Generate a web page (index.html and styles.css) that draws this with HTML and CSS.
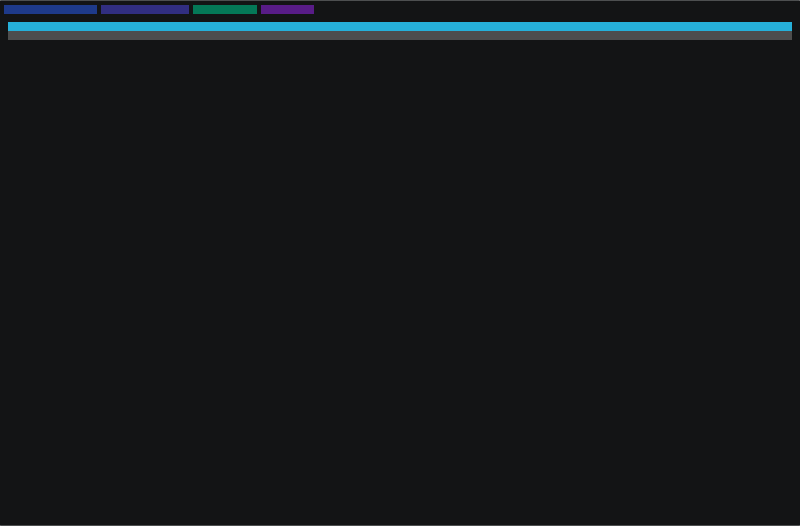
FILE: index.html
```html
<!DOCTYPE html>
<html lang="en">
  <head>
    <meta charset="utf-8">
    <meta name="viewport" content="width=device-width, initial-scale=1">
    <link rel="stylesheet" href="styles.css">
  </head>
  <body>
    <div class="panel">
      <div class="tags">
        <span class="tag tag-blue"></span>
        <span class="tag tag-indigo"></span>
        <span class="tag tag-green"></span>
        <span class="tag tag-purple"></span>
      </div>

      <div class="list">
        <div class="row row-active"></div>
        <div class="row"></div>
      </div>
    </div>
  </body>
</html>
```

FILE: styles.css
```css
* {
  box-sizing: border-box;
  margin: 0;
  padding: 0;
}

body {
  background-color: #ffffff;
  font-family: "Liberation Sans", Arial, sans-serif;
}

.panel {
  min-height: 100vh;
  padding: 4px;
  background-color: #131415;
  border-top: 1px solid #4d4f50;
  border-bottom: 1px solid #4d4f50;
  border-radius: 1px;
}

/* Coloured tags */
.tags {
  display: flex;
  gap: 4px;
}

.tag {
  height: 9px;
}

.tag-blue {
  width: 93px;
  background-color: #1e3a8a;
}

.tag-indigo {
  width: 88px;
  background-color: #312e81;
}

.tag-green {
  width: 64px;
  background-color: #047857;
}

.tag-purple {
  width: 53px;
  background-color: #581c87;
}

/* Rows below the tags */
.list {
  padding: 8px 4px;
}

.row {
  height: 9px;
  background-color: #4d4d4d;
}

.row-active {
  background-color: #26b0d9;
}
```
